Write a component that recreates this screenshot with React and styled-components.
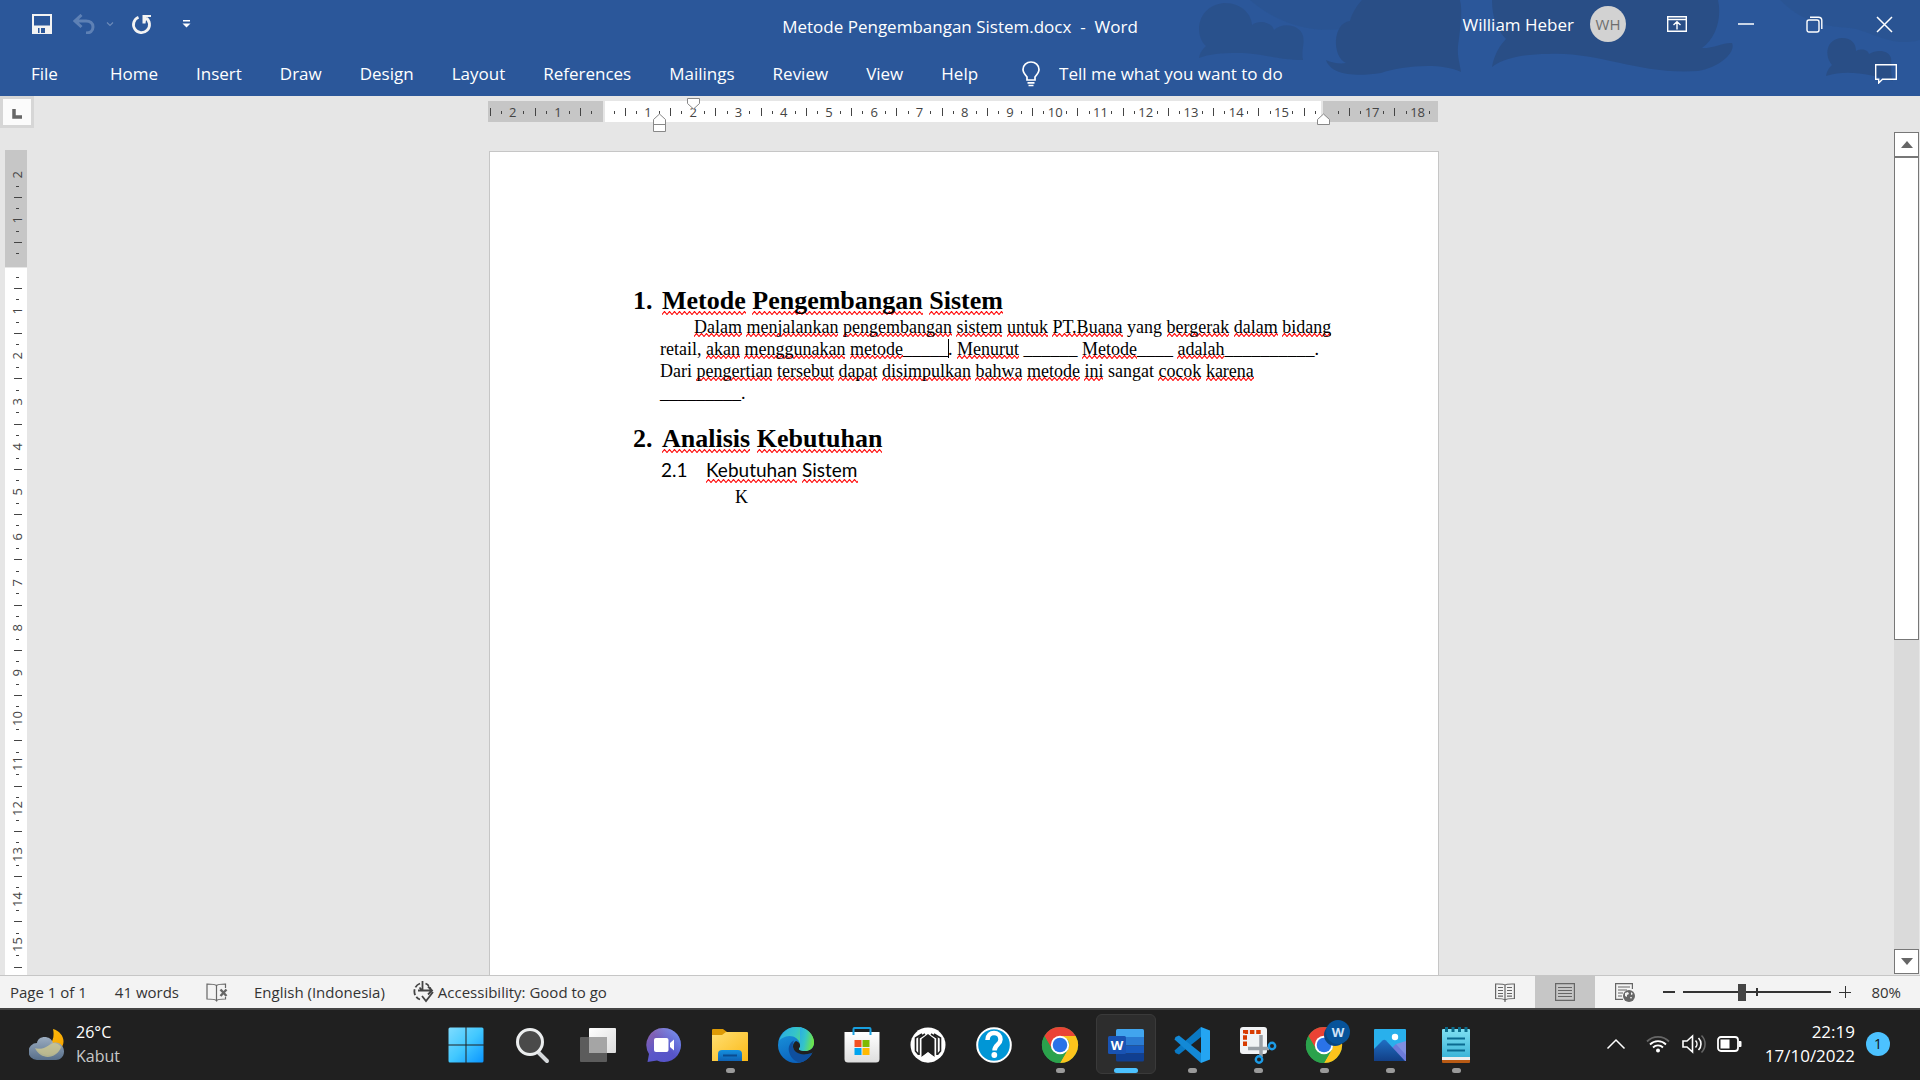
import React from "react";
import styled, { createGlobalStyle, css } from "styled-components";

const UI = `"Open Sans", "Noto Sans", sans-serif`;
const SERIF = `"Liberation Serif", "Times New Roman", serif`;

const Global = createGlobalStyle`
  *, *::before, *::after { box-sizing: border-box; }
  body { margin: 0; background: #e6e6e6; font-family: ${UI}; }
  button, input { font: inherit; color: inherit; }
`;

const Screen = styled.div`
  display: flex;
  flex-direction: column;
  height: 100vh;
  overflow: hidden;
`;

const IconButton = styled.button`
  display: flex;
  align-items: center;
  justify-content: center;
  flex: none;
  width: ${(p) => p.$w || 40}px;
  height: 40px;
  padding: 0;
  border: 0;
  background: none;
  color: inherit;
  opacity: ${(p) => (p.$faded ? 0.3 : 1)};
  svg { display: block; }
`;

/* ---------- header ---------- */

const Header = styled.header`
  position: relative;
  flex: none;
  background: #2b579a;
  color: #fff;
  font-size: 17px;
`;

const Artwork = styled.svg`
  position: absolute;
  top: 0;
  right: 0;
  height: 96px;
  width: 740px;
`;

const TitleRow = styled.div`
  position: relative;
  display: grid;
  grid-template-columns: 1fr auto 1fr;
  align-items: center;
  height: 48px;
`;

const QuickAccess = styled.div`
  display: flex;
  padding-left: 20px;
`;

const DocTitle = styled.div`
  padding-top: 5px;
  white-space: pre;
`;

const WindowTools = styled.div`
  display: flex;
  align-items: center;
  justify-content: flex-end;
`;

const UserButton = styled.button`
  display: flex;
  align-items: center;
  gap: 16px;
  margin-right: 16px;
  padding: 0;
  border: 0;
  background: none;
  white-space: nowrap;
`;

const Avatar = styled.span`
  display: grid;
  place-items: center;
  width: 36px;
  height: 36px;
  border-radius: 50%;
  background: #d2d2d2;
  color: #6e6e6e;
  font-size: 15px;
`;

const TabRow = styled.nav`
  position: relative;
  display: flex;
  align-items: center;
  height: 48px;
  padding: 3px 11px 0 12px;
`;

const Tab = styled.button`
  flex: none;
  padding: 0 ${(p) => (p.$wide ? 33 : 19)}px 0 19px;
  border: 0;
  background: none;
  white-space: nowrap;
`;

const TellMe = styled.label`
  display: flex;
  align-items: center;
  gap: 19px;
  flex: 1;
  padding-left: 25px;
  input {
    width: 260px;
    padding: 0;
    border: 0;
    outline: 0;
    background: none;
  }
  input::placeholder { color: #fff; opacity: 1; }
`;

/* ---------- workspace ---------- */

const Workspace = styled.main`
  display: grid;
  grid-template-columns: 36px minmax(0, 1fr) 28px;
  flex: 1;
  min-height: 0;
  background: #e6e6e6;
`;

const LeftRail = styled.div`
  display: flex;
  flex-direction: column;
  gap: 22px;
  min-height: 0;
`;

const TabStop = styled.button`
  flex: none;
  display: grid;
  place-items: center;
  width: 34px;
  height: 32px;
  padding: 4px 0 0;
  border: 3px solid #d6d6d6;
  background: #fbfbfb;
`;

const rulerText = css`
  color: #444;
  font-size: 13px;
  line-height: 16px;
`;

const VRuler = styled.div`
  ${rulerText}
  display: flex;
  flex-direction: column;
  gap: 1px;
  flex: 1;
  min-height: 0;
  width: 22px;
  margin-left: 5px;
`;

const HRuler = styled.div`
  ${rulerText}
  position: relative;
  display: flex;
  gap: 2px;
  width: 950px;
  height: 21px;
  margin-right: 2px;
`;

const VBand = styled.div`
  display: flex;
  flex-direction: column;
  justify-content: space-between;
  flex: ${(p) => (p.$margin ? "none" : 1)};
  height: ${(p) => (p.$margin ? "117px" : "auto")};
  padding: ${(p) => p.$pad};
  background: ${(p) => (p.$margin ? "#c6c6c6" : "#fff")};
`;

const HBand = styled.div`
  display: flex;
  justify-content: space-between;
  flex: ${(p) => (p.$margin ? "none" : 1)};
  width: ${(p) => (p.$margin ? "115px" : "auto")};
  padding: ${(p) => p.$pad};
  background: ${(p) => (p.$margin ? "#c6c6c6" : "#fff")};
`;

const HTick = styled.span`
  display: flex;
  align-items: center;
  justify-content: center;
  width: 0;
  height: 22px;
  i { flex: none; width: 1px; height: ${(p) => (p.$half ? 8 : 3)}px; background: #444; }
  b { flex: none; font-weight: 400; }
`;

const VTick = styled.span`
  display: flex;
  align-items: center;
  justify-content: center;
  height: 0;
  width: 25px;
  i { flex: none; height: 1px; width: ${(p) => (p.$half ? 8 : 3)}px; background: #444; }
  b { flex: none; font-weight: 400; writing-mode: vertical-rl; transform: rotate(180deg); margin-right: 2px; }
`;

const Marker = styled.svg`
  position: absolute;
  left: ${(p) => p.$x}px;
  top: ${(p) => p.$y}px;
`;

const Canvas = styled.div`
  display: flex;
  flex-direction: column;
  align-items: center;
  gap: 29px;
  min-height: 0;
  padding-top: 5px;
  overflow: hidden;
`;

const Paper = styled.article`
  flex: 1;
  width: 950px;
  min-height: 0;
  padding: 134px 0 0 114px;
  border: 1px solid #c6c6c6;
  border-bottom: 0;
  background: #fff;
  color: #000;
  font-family: ${SERIF};
  font-size: 18px;
  line-height: 22px;
  white-space: nowrap;
`;

const Heading = styled.h1`
  display: flex;
  margin: ${(p) => (p.$spaced ? 20 : 0)}px 0 0 29px;
  font-size: 26px;
  font-weight: 700;
  line-height: 30px;
`;

const HeadingNumber = styled.span`
  width: 29px;
`;

const Para = styled.p`
  margin: 0 0 0 ${(p) => p.$indent}px;
  text-indent: ${(p) => p.$first || 0}px;
`;

const Misspelt = styled.span`
  background: url("data:image/svg+xml,%3Csvg xmlns='http://www.w3.org/2000/svg' width='5' height='4'%3E%3Cpath d='M-1 2L0 3.500L2.500 .5L5 3.500L6 2' fill='none' stroke='%23f00' stroke-width='1.100'/%3E%3C/svg%3E") left bottom / 5px 4px repeat-x;
`;

const SubHeading = styled.h2`
  display: flex;
  margin: 0 0 0 57px;
  font-family: Lato, "Open Sans", sans-serif;
  font-size: 19px;
  font-weight: 400;
  line-height: 32px;
  ${Misspelt} { padding-bottom: 2px; }
`;

const SubNumber = styled.span`
  width: 45px;
`;

const Caret = styled.span`
  display: inline-block;
  width: 1px;
  height: 19px;
  margin-right: -1px;
  background: #000;
  vertical-align: -3px;
`;

const ScrollBar = styled.div`
  display: flex;
  flex-direction: column;
  margin: 36px 0 1px;
  padding: 0 1px 0 2px;
`;

const ScrollTrack = styled.div`
  flex: 1;
  min-height: 0;
  background: #dadada;
`;

const ScrollThumb = styled.div`
  height: 61%;
  border: 1px solid #777;
  background: #fff;
`;

const ScrollButton = styled.button`
  display: grid;
  place-items: center;
  height: 25px;
  padding: 0;
  border: 1px solid #777;
  background: #fff;
`;

/* ---------- status bar ---------- */

const StatusBar = styled.footer`
  display: flex;
  align-items: stretch;
  justify-content: space-between;
  flex: none;
  height: 35px;
  border-top: 1px solid #c6c6c6;
  border-bottom: 2px solid #444;
  background: #f3f3f3;
  color: #333;
  font-size: 15px;
`;

const StatusGroup = styled.div`
  display: flex;
  align-items: stretch;
  padding: ${(p) => p.$pad};
`;

const StatusItem = styled.button`
  display: flex;
  align-items: center;
  gap: 4px;
  margin-right: ${(p) => p.$gap || 0}px;
  padding: 0;
  border: 0;
  background: none;
  white-space: nowrap;
`;

const ZoomLevel = styled(StatusItem)`
  margin-left: 12px;
`;

const ViewButton = styled.button`
  display: grid;
  place-items: center;
  width: 60px;
  padding: 0;
  border: 0;
  background: ${(p) => (p.$on ? "#c6c6c6" : "none")};
`;

const ZoomButton = styled.button`
  display: grid;
  place-items: center;
  width: 28px;
  padding: 0;
  border: 0;
  background: none;
`;

const ZoomSlider = styled.input`
  appearance: none;
  width: 148px;
  height: 32px;
  margin: 0;
  background:
    linear-gradient(#333, #333) center / 2px 8px no-repeat,
    linear-gradient(#333, #333) center / 100% 2px no-repeat;
  &::-webkit-slider-thumb {
    appearance: none;
    width: 8px;
    height: 17px;
    background: #444;
  }
`;

/* ---------- taskbar ---------- */

const Taskbar = styled.div`
  display: grid;
  grid-template-columns: 1fr auto 1fr;
  flex: none;
  height: 70px;
  background: #202020;
  color: #fff;
  font-size: 16px;
  line-height: 24px;
`;

const Weather = styled.button`
  display: flex;
  align-items: center;
  gap: 11px;
  justify-self: start;
  padding: 0 0 2px 29px;
  border: 0;
  background: none;
  text-align: left;
  line-height: 24px;
  small { display: block; color: #c8c8c8; font-size: 16px; }
`;

const Apps = styled.div`
  display: flex;
  gap: 6px;
  padding: 4px 0 6px 2px;
`;

const AppButton = styled.button`
  display: flex;
  flex-direction: column;
  align-items: center;
  justify-content: flex-end;
  gap: 5px;
  width: 60px;
  padding: 0;
  border: 1px solid ${(p) => (p.$active ? "#3a3a3a" : "transparent")};
  border-radius: 6px;
  background: ${(p) => (p.$active ? "#2d2d2d" : "none")};
  svg { display: block; overflow: visible; }
  &::after {
    content: "";
    width: ${(p) => (p.$active ? 24 : 9)}px;
    height: 5px;
    border-radius: 3px;
    background: ${(p) => (p.$active ? "#4cc2ff" : p.$running ? "#9a9a9a" : "transparent")};
  }
`;

const Tray = styled.div`
  display: flex;
  align-items: center;
  justify-content: flex-end;
  padding: 0 30px 3px 0;
`;

const Clock = styled.button`
  margin: 0 11px 0 17px;
  padding: 0;
  border: 0;
  background: none;
  text-align: right;
  font-size: 17px;
  line-height: 24px;
`;

const Badge = styled.span`
  display: grid;
  place-items: center;
  width: 24px;
  height: 24px;
  border-radius: 50%;
  background: #4cc2ff;
  color: #111;
  font-size: 14px;
`;

/* ---------- icons ---------- */

const SaveIcon = () => (
  <svg width="20" height="20" viewBox="0 0 20 20">
    <path d="M1 1h18v18H1z" fill="none" stroke="#f3f3f3" strokeWidth="2" />
    <path d="M1 11.500h18V19H1z" fill="#f3f3f3" />
    <path d="M6 14h7v5H6z" fill="#2b579a" />
    <path d="M7.500 14h1.500v5H7.500z" fill="#f3f3f3" />
  </svg>
);
const UndoIcon = () => (
  <svg width="22" height="20" viewBox="0 0 22 20" fill="none" stroke="#d5e2f5" strokeWidth="3">
    <path d="M8.500 1L2 7l6.500 6M2.500 7H13c4 0 7 2 7 6 0 4-3 6-7 6" />
  </svg>
);
const SmallChevron = () => (
  <svg width="8" height="5" viewBox="0 0 8 5" fill="none" stroke="#fff" strokeWidth="1.200"><path d="M1 .5l3 3 3-3" /></svg>
);
const RedoIcon = () => (
  <svg width="21" height="21" viewBox="0 0 21 21">
    <path d="M7.500 3.200A8 8 0 1 0 15 4" fill="none" stroke="#f3f3f3" strokeWidth="2.800" />
    <path d="M11.500 1H20v2h-4.500l-1 6.500h-3z" fill="#f3f3f3" />
  </svg>
);
const CustomizeIcon = () => (
  <svg width="9" height="8" viewBox="0 0 9 8" fill="#fff"><path d="M1 0h7v1.500H1zM0.500 3.500h8L4.500 7.500z" /></svg>
);
const RibbonIcon = () => (
  <svg width="20" height="16" viewBox="0 0 20 16" fill="none" stroke="#fff" strokeWidth="1.400">
    <path d="M.7.700h18.600v14.600H.700zM.7 3.500h18.600M10 13.500V6M6.500 9L10 5.800 13.500 9" />
  </svg>
);
const MinIcon = () => <svg width="16" height="2"><path d="M0 1h16" stroke="#fff" strokeWidth="1.500" /></svg>;
const RestoreIcon = () => (
  <svg width="17" height="17" viewBox="0 0 17 17" fill="none" stroke="#fff" strokeWidth="1.400">
    <rect x="1" y="4" width="12" height="12" rx="2" /><path d="M4 1.200h8.500a3.300 3.300 0 0 1 3.300 3.300V13" />
  </svg>
);
const CloseIcon = () => <svg width="17" height="17"><path d="M1 1l15 15M16 1L1 16" stroke="#fff" strokeWidth="1.500" /></svg>;
const BulbIcon = () => (
  <svg width="18" height="26" viewBox="0 0 18 26" fill="none" stroke="#fff" strokeWidth="1.700">
    <path d="M5 19v-3C3 13.500 1 11.500 1 8.500a8 7.500 0 0 1 16 0c0 3-2 5-4 7.500v3zM5.500 21.800h7M6.500 24.500h5" />
  </svg>
);
const CommentIcon = () => (
  <svg width="22" height="20" viewBox="0 0 22 20" fill="none" stroke="#fff" strokeWidth="1.400">
    <path d="M.7.700h20.600v14.600H7.500L3.700 19v-3.700H.7z" />
  </svg>
);

const ProofIcon = () => (
  <svg width="22" height="19" viewBox="0 0 22 19" fill="none" stroke="#666" strokeWidth="1.200">
    <path d="M10.500 2.500C9 1.200 7 1 1 1v15c6 0 8 0 9.500 1.700zM10.500 2.500C12 1.200 14 1 19.500 1v4M10.500 17.700C12 16 14 16 19.500 16v-2" />
    <path d="M14.500 6.500l6 6.500M20.500 6.500l-6 6.500" strokeWidth="2.400" />
  </svg>
);
const AccessIcon = () => (
  <svg width="21" height="22" viewBox="0 0 21 22" fill="none" stroke="#444" strokeWidth="1.800">
    <path d="M7 2.500A8.500 8.500 0 0 0 7 18.500" strokeDasharray="6 2" />
    <path d="M12.500 2.500a8.500 8.500 0 0 1 5 5.500" strokeDasharray="4 2" />
    <path d="M9.500 0v10M5 9.500h13M15 5.500l4 4-4 4M6.500 6.500l3 3.500M9 15l4 5 7-9" />
  </svg>
);
const ReadIcon = () => (
  <svg width="20" height="19" viewBox="0 0 20 19" fill="none" stroke="#666" strokeWidth="1.200">
    <path d="M10 2C8.500.800 6 1 .6 1v14.500c5 0 8 0 9.400 1.500 1.400-1.500 4.400-1.500 9.400-1.500V1C14 1 11.500.800 10 2zM10 2v17M3 4.500h5M3 7.500h5M3 10.500h5M3 13.200h5M12 4.500h5M12 7.500h5M12 10.500h5M12 13.200h5" />
  </svg>
);
const PrintLayoutIcon = () => (
  <svg width="20" height="18" viewBox="0 0 20 18" fill="none" stroke="#666" strokeWidth="1.200">
    <path d="M.6.600h18.800v16.800H.6zM3 4.500h14M3 7.500h14M3 10.500h14M3 13.500h14" />
  </svg>
);
const WebLayoutIcon = () => (
  <svg width="20" height="19" viewBox="0 0 20 19">
    <path d="M8 16.400H.6V.600h16.800V6M3 4h12M3 7h9M3 10h5M3 13h4" fill="none" stroke="#666" strokeWidth="1.200" />
    <circle cx="14" cy="13" r="6" fill="#666" />
    <path d="M10 10l3-1 1 2-2 1v2l-2-1zM16 9l2 2-2 1zM15 14h2l-1 2z" fill="#f3f3f3" />
  </svg>
);

const WeatherIcon = () => (
  <svg width="36" height="33" viewBox="0 0 36 33">
    <defs>
      <linearGradient id="moon" x1="0" y1="0" x2="1" y2="1"><stop offset="0" stopColor="#ffc40c" /><stop offset="1" stopColor="#f59e00" /></linearGradient>
      <linearGradient id="cloud" x1="0" y1="0" x2="0" y2="1"><stop offset="0" stopColor="#a9bcd2" /><stop offset="1" stopColor="#5e7896" /></linearGradient>
    </defs>
    <path d="M24 1c10 3 14 13 7 21-6 7-19 7-24-2 11 3 20-6 17-19z" fill="url(#moon)" />
    <path d="M8 32a8 8 0 0 1 0-17c1-8 14-8 16 0 6-2 11 3 11 8.500S31 32 27 32z" fill="url(#cloud)" opacity=".9" />
    <path d="M6 20c7 3 14-3 18-5 4 0 7 2 8 4-4 12-20 14-26 1z" fill="#d9cf8c" opacity=".65" />
  </svg>
);
const StartIcon = () => (
  <svg width="36" height="36" viewBox="0 0 36 36">
    <defs><linearGradient id="win" x1="0" y1="0" x2="1" y2="1"><stop offset="0" stopColor="#7fdcff" /><stop offset=".5" stopColor="#42c8ff" /><stop offset="1" stopColor="#0a95ff" /></linearGradient></defs>
    <path d="M2 .5h15.500v17H.5V2A1.500 1.500 0 0 1 2 .5zM18.500 .5H34A1.500 1.500 0 0 1 35.500 2v15.500h-17zM.5 18.500h17v17H2A1.500 1.500 0 0 1 .5 34zM18.500 18.500h17V34a1.500 1.500 0 0 1-1.500 1.500H18.500z" fill="url(#win)" />
  </svg>
);
const SearchIcon = () => (
  <svg width="36" height="36" viewBox="0 0 36 36">
    <path d="M24 25l9 9" stroke="#d5d8db" strokeWidth="4" strokeLinecap="round" />
    <circle cx="16" cy="15" r="12.500" fill="#4a4a4a" stroke="#eceeef" strokeWidth="3" />
  </svg>
);
const TaskViewIcon = () => (
  <svg width="36" height="36" viewBox="0 0 36 36">
    <defs><linearGradient id="tv" x1="0" y1="0" x2="1" y2="1"><stop offset="0" stopColor="#fff" /><stop offset="1" stopColor="#dcdcdc" /></linearGradient></defs>
    <rect x="9" y="1" width="27" height="25" rx="1" fill="url(#tv)" />
    <rect x="0" y="10" width="27" height="25" rx="1" fill="#5c5c5c" />
    <path d="M9 10h18v16H9z" fill="#a5a5a5" />
  </svg>
);
const ChatIcon = () => (
  <svg width="36" height="36" viewBox="0 0 36 36">
    <defs><linearGradient id="chat" x1="0" y1="0" x2=".7" y2="1"><stop offset="0" stopColor="#9564a8" /><stop offset=".6" stopColor="#5b57c9" /><stop offset="1" stopColor="#5553c8" /></linearGradient>
      <linearGradient id="chat2" x1="0" y1="1" x2="1" y2="0"><stop offset=".5" stopColor="#7b9bf5" stopOpacity="0" /><stop offset="1" stopColor="#7b9bf5" /></linearGradient></defs>
    <path d="M18 1a17 17 0 1 1-7 32.500L1.500 35 3 27A17 17 0 0 1 18 1z" fill="url(#chat)" />
    <path d="M18 1a17 17 0 1 1-7 32.500L1.500 35 3 27A17 17 0 0 1 18 1z" fill="url(#chat2)" />
    <rect x="8" y="11" width="14.500" height="14" rx="2" fill="#fff" /><path d="M24 16l4-3.500v11L24 20z" fill="#fff" />
  </svg>
);
const FolderIcon = () => (
  <svg width="36" height="36" viewBox="0 0 36 36">
    <defs><linearGradient id="fold" x1="0" y1="0" x2="1" y2="1"><stop offset="0" stopColor="#ffdf72" /><stop offset="1" stopColor="#fbb917" /></linearGradient>
      <linearGradient id="foldb" x1="0" y1="0" x2="0" y2="1"><stop offset="0" stopColor="#1490df" /><stop offset="1" stopColor="#0f62b4" /></linearGradient></defs>
    <path d="M0 3a1 1 0 0 1 1-1h10l4 3-4 4H0z" fill="#dd9a05" />
    <path d="M0 8h10l4-3h21a1 1 0 0 1 1 1v28H0z" fill="url(#fold)" />
    <path d="M6 34V27a4 4 0 0 1 4-4h16a4 4 0 0 1 4 4v7z" fill="url(#foldb)" /><path d="M11 28.500h14" stroke="#0a4c90" strokeWidth="2" />
  </svg>
);
const EdgeIcon = () => (
  <svg width="36" height="36" viewBox="0 0 36 36">
    <defs><linearGradient id="ed1" x1="0" y1="0" x2="1" y2=".3"><stop offset="0" stopColor="#29a9e8" /><stop offset=".5" stopColor="#35c4c9" /><stop offset="1" stopColor="#6be34f" /></linearGradient>
      <linearGradient id="ed2" x1="0" y1="0" x2=".4" y2="1"><stop offset="0" stopColor="#1c9be0" /><stop offset="1" stopColor="#0b63bd" /></linearGradient></defs>
    <circle cx="18" cy="18" r="18" fill="url(#ed2)" />
    <path d="M1 14C4 5 10 0 18 0c11 0 18 8 18 15.500 0 6-5 8.500-9 8.500-4 0-6.500-1-6-2.500 1-1 1.500-2.500 1-4.500C21 11 14 7.500 8 9.500 4.500 10.500 2 12.500 1 14z" fill="url(#ed1)" />
    <path d="M16 13.500c-4 2-6 6-5 11 1 5 5 10 11 11 5-1 9-4 12-9-1-1-3 1-7 1-6 0-11-3-12-7-.5-3 0-5 1-7z" fill="#0f4f9e" />
    <path d="M18 14c-4 2-4 8 0 11 4 3 10 3 16 1l2-2V16c0 6-5 8-9 8-4 0-6.500-1-6-2.500 2-2 1.500-6-3-7.500z" fill="#202020" />
    <path d="M22 0c9 2 14 9 14 15.500 0 6-5 8.500-9 8.500-4 0-6.500-1-6-2.500 1-1 1.500-2.500 1-4.500z" fill="url(#ed1)" />
  </svg>
);
const StoreIcon = () => (
  <svg width="36" height="36" viewBox="0 0 36 36">
    <defs><linearGradient id="st" x1="0" y1="0" x2="0" y2="1"><stop offset="0" stopColor="#fff" /><stop offset="1" stopColor="#dedede" /></linearGradient></defs>
    <path d="M.5 5h35v27a3.500 3.500 0 0 1-3.500 3.500H4A3.500 3.500 0 0 1 .5 32z" fill="url(#st)" />
    <path d="M9.500 8V2a1 1 0 0 1 1-1h15a1 1 0 0 1 1 1v6" fill="none" stroke="#18a0e0" strokeWidth="2" />
    <path d="M10.500 13h7v7h-7z" fill="#f25022" /><path d="M18.500 13h7v7h-7z" fill="#7fba00" /><path d="M10.500 21h7v7h-7z" fill="#00a4ef" /><path d="M18.500 21h7v7h-7z" fill="#ffb900" />
  </svg>
);
const HomeShieldIcon = () => (
  <svg width="36" height="36" viewBox="0 0 36 36">
    <circle cx="18" cy="18" r="17.500" fill="#fff" />
    <path d="M12 7L5.500 11v13l3 3.500M24 7l6.500 4v13l-3 3.500M15 7l-6 4v17M21 7l6 4v17" fill="none" stroke="#202020" strokeWidth="1.600" />
    <path d="M11.500 12l6.500-5 6.500 5v18L18 25l-6.500 5z" fill="#202020" />
    <path d="M11 34v-3.500L18 25.500l7 5V34l-7 1.500z" fill="#fff" />
  </svg>
);
const HelpIcon = () => (
  <svg width="36" height="36" viewBox="0 0 36 36">
    <circle cx="18" cy="18" r="16.800" fill="#0096d6" stroke="#fff" strokeWidth="2" />
    <path d="M11.500 13c0-5 3-7 6.500-7s6.500 2.500 6.500 6.500c0 5-6 5.500-6 11" fill="none" stroke="#fff" strokeWidth="4.500" />
    <circle cx="18.300" cy="28" r="2.900" fill="#fff" />
  </svg>
);
const ChromeArt = () => (
  <>
    <circle cx="18" cy="18" r="18" fill="#2ba24c" />
    <path d="M2.400 9A18 18 0 0 1 33.600 9H18L10.200 13.500 10.200 22.500z" fill="#ea4335" />
    <path d="M33.600 9A18 18 0 0 1 18 36L25.800 22.500A9 9 0 0 0 25 12L18 9z" fill="#fcc31c" />
    <path d="M2.400 9L10.200 22.500 18 27 25.800 22.500 18 36A18 18 0 0 1 2.400 9z" fill="#2ba24c" />
    <circle cx="18" cy="18" r="9.200" fill="#fff" /><circle cx="18" cy="18" r="7.300" fill="#2a73e8" />
  </>
);
const ChromeIcon = () => <svg width="36" height="36" viewBox="0 0 36 36"><ChromeArt /></svg>;
const ChromeProfileIcon = () => (
  <svg width="36" height="36" viewBox="0 0 36 36">
    <ChromeArt />
    <circle cx="29" cy="8" r="11" fill="#0a4680" /><circle cx="32" cy="5" r="12" fill="#07539a" />
    <text x="32" y="10" textAnchor="middle" fontFamily={UI} fontWeight="700" fontSize="13" fill="#cfe3f7">W</text>
  </svg>
);
const WordIcon = () => (
  <svg width="36" height="36" viewBox="0 0 36 36">
    <path d="M8 3.500A1.500 1.500 0 0 1 9.500 2h25A1.500 1.500 0 0 1 36 3.500V10H8z" fill="#41a5ee" />
    <path d="M8 10h28v8.500H8z" fill="#2b7cd3" /><path d="M8 18.500h28v8H8z" fill="#185abd" />
    <path d="M8 26.500h28V33a1.500 1.500 0 0 1-1.500 1.500h-25A1.500 1.500 0 0 1 8 33z" fill="#103f91" />
    <rect x="0" y="9" width="18" height="18" rx="1.500" fill="#1953b3" />
    <text x="9" y="23" textAnchor="middle" fontFamily={UI} fontWeight="700" fontSize="13" fill="#fff">W</text>
  </svg>
);
const CodeIcon = () => (
  <svg width="36" height="36" viewBox="0 0 36 36">
    <path d="M27 0v10L5 27.500 1.500 26l-1-2.500z" fill="#0a79c4" />
    <path d="M27 36V26L5 8.500 1.500 10l-1 2.500z" fill="#1389d6" />
    <path d="M27 0l9 3.500v29L27 36z" fill="#24a5f2" />
  </svg>
);
const SnipIcon = () => (
  <svg width="36" height="36" viewBox="0 0 36 36">
    <rect x="0" y="0" width="27" height="27" rx="3" fill="#f1f3f5" />
    <path d="M5 19V5h16" fill="none" stroke="#d83b01" strokeWidth="4" strokeDasharray="4.500 1.800" />
    <path d="M8 21.500h21M21 8v22" fill="none" stroke="#9aa0a6" strokeWidth="3.500" />
    <circle cx="32" cy="19" r="3.200" fill="none" stroke="#1c9be6" strokeWidth="2.400" /><circle cx="19" cy="32.500" r="3.200" fill="none" stroke="#1c9be6" strokeWidth="2.400" />
  </svg>
);
const PhotosIcon = () => (
  <svg width="36" height="36" viewBox="0 0 36 36">
    <defs><linearGradient id="ph" x1="0" y1="0" x2="0" y2="1"><stop offset="0" stopColor="#1f6fc4" /><stop offset="1" stopColor="#123f86" /></linearGradient></defs>
    <path d="M2 3a1 1 0 0 1 1-1h30a1 1 0 0 1 1 1v31H2z" fill="#29b0ec" />
    <path d="M16 25l8-8 10 10v7H22z" fill="#6d7bd9" /><path d="M24 17l10-3v14z" fill="#7f8fe0" />
    <path d="M2 22l8.500-8.500a2.500 2.500 0 0 1 3.500 0L33 34H2z" fill="url(#ph)" /><circle cx="23" cy="10" r="3.200" fill="#fff" />
  </svg>
);
const NotepadIcon = () => (
  <svg width="36" height="36" viewBox="0 0 36 36">
    <defs><linearGradient id="np" x1="0" y1="0" x2="0" y2="1"><stop offset="0" stopColor="#7fe0f2" /><stop offset="1" stopColor="#3db5d8" /></linearGradient></defs>
    <path d="M4 30h28v5a1 1 0 0 1-1 1H5a1 1 0 0 1-1-1z" fill="#b85a14" /><path d="M4 29h28v4H4z" fill="#eee" />
    <path d="M4 3a1 1 0 0 1 1-1h26a1 1 0 0 1 1 1v27H4z" fill="url(#np)" />
    <path d="M8.500 0v5M15 0v5M21.500 0v5M28 0v5" stroke="#0a6c8c" strokeWidth="3" />
    <path d="M9 11.500h18M9 17.500h18M9 23.500h18" stroke="#0a6a90" strokeWidth="2.200" />
  </svg>
);

const ChevronUp = () => <svg width="20" height="12" viewBox="0 0 20 12"><path d="M1.500 10.500L10 2l8.500 8.500" fill="none" stroke="#fff" strokeWidth="1.500" /></svg>;
const WifiIcon = () => (
  <svg width="24" height="18" viewBox="0 0 24 18" fill="none" stroke="#fff" strokeWidth="1.800">
    <path d="M1 6.500a15.500 15.500 0 0 1 22 0" stroke="#666" /><path d="M4 9.500a11.300 11.300 0 0 1 16 0M7 12.500a7 7 0 0 1 10 0" /><circle cx="12" cy="15.500" r="2" fill="#fff" stroke="none" />
  </svg>
);
const SpeakerIcon = () => (
  <svg width="24" height="20" viewBox="0 0 24 20" fill="none" stroke="#fff" strokeWidth="1.600">
    <path d="M1 7h4l5.500-5v16L5 13H1zM13.500 6.500a5 5 0 0 1 0 7M16.500 4a8.500 8.500 0 0 1 0 12" /><path d="M19.500 1.500a12 12 0 0 1 0 17" stroke="#666" />
  </svg>
);
const BatteryIcon = () => (
  <svg width="25" height="16" viewBox="0 0 25 16"><rect x="1" y="1" width="20" height="14" rx="3" fill="none" stroke="#fff" strokeWidth="1.800" /><path d="M3.500 3.500h9v9h-9zM22 5h1.500a1 1 0 0 1 1 1v4a1 1 0 0 1-1 1H22z" fill="#fff" /></svg>
);

/* ---------- parts ---------- */

/* Words inside {braces} get the spelling squiggle, a | is the text cursor. */
const Checked = ({ children }) =>
  children.split(/(\{[^}]*\}|\|)/).map((part, i) => {
    if (part === "|") return <Caret key={i} />;
    if (part[0] === "{") return <Misspelt key={i}>{part.slice(1, -1)}</Misspelt>;
    return part;
  });

/* Ruler positions are counted in quarters of a centimetre. */
const quarters = (from, to) => Array.from({ length: to - from + 1 }, (_, i) => from + i);
const ticks = (Tick, from, to) =>
  quarters(from, to).map((q) => (
    <Tick key={q} $half={q % 4 !== 0 && q % 2 === 0}>
      {q % 4 === 0 ? <b>{Math.abs(q / 4)}</b> : <i />}
    </Tick>
  ));

const TABS = ["File", "Home", "Insert", "Draw", "Design", "Layout", "References", "Mailings", "Review", "View", "Help"];

const APPS = [
  ["Start", StartIcon], ["Search", SearchIcon], ["Task View", TaskViewIcon], ["Chat", ChatIcon],
  ["File Explorer", FolderIcon, true], ["Edge", EdgeIcon], ["Store", StoreIcon], ["Home", HomeShieldIcon],
  ["Help", HelpIcon], ["Chrome", ChromeIcon, true], ["Word", WordIcon, true, true], ["Code", CodeIcon, true],
  ["Snipping Tool", SnipIcon, true], ["Chrome profile", ChromeProfileIcon, true], ["Photos", PhotosIcon, true], ["Notepad", NotepadIcon, true],
];

export default function App() {
  return (
    <Screen>
      <Global />
      <Header>
        <Artwork viewBox="0 0 740 96" aria-hidden="true">
          <g fill="#294e86">
            <path d="M19 58c1-6 4-9 7-12C14 36 16 6 44 3c20 0 28 14 28 22 8-6 20-2 22 5 8-8 26-6 29 6 2 8-2 14 0 24-26 0-40-7-66-7-16 0-28 1-38 5z" opacity=".7" />
            <path d="M70 0h210v26c-30 20-60-10-100 0-40 10-80 0-110-26z" opacity=".3" />
            <path d="M146 60c6 3 14 4 20 3-14-6-14-40 4-42 2-8 6-14 12-21h98c3 12 0 30-2 46-1 10 2 18 3 26-20-10-60-6-80 1-26 4-50 2-55-13z" />
            <path d="M312 67c2-12 8-22 14-28-8-8-14-20-14-39h226c4 18-2 38-16 48 14 0 22-6 30-5 4 8-10 24-34 28-60 4-100-20-150-17-24 0-44 4-56 13z" />
            <path d="M646 76c1-6 4-9 6-11-8-10-6-26 10-27 10 0 14 6 14 13 6-3 12-1 13 3 8-5 20-4 22 4 1 8-1 16 2 23-22-6-44-12-67-5z" />
            <path d="M600 0h140v40c-30 8-50-10-70-12-30-2-50-8-70-28z" opacity=".3" />
          </g>
        </Artwork>
        <TitleRow>
          <QuickAccess>
            <IconButton $w={43} aria-label="Save"><SaveIcon /></IconButton>
            <IconButton $w={42} $faded aria-label="Undo"><UndoIcon /></IconButton>
            <IconButton $w={10} $faded aria-label="Undo list"><SmallChevron /></IconButton>
            <IconButton $w={53} aria-label="Repeat"><RedoIcon /></IconButton>
            <IconButton $w={36} aria-label="Customize"><CustomizeIcon /></IconButton>
          </QuickAccess>
          <DocTitle>Metode Pengembangan Sistem.docx  -  Word</DocTitle>
          <WindowTools>
            <UserButton>William Heber<Avatar>WH</Avatar></UserButton>
            <IconButton $w={69} aria-label="Ribbon options"><RibbonIcon /></IconButton>
            <IconButton $w={69} aria-label="Minimize"><MinIcon /></IconButton>
            <IconButton $w={69} aria-label="Restore"><RestoreIcon /></IconButton>
            <IconButton $w={71} aria-label="Close"><CloseIcon /></IconButton>
          </WindowTools>
        </TitleRow>
        <TabRow>
          {TABS.map((t) => <Tab key={t} $wide={t === "File"}>{t}</Tab>)}
          <TellMe>
            <BulbIcon />
            <input aria-label="Tell me" placeholder="Tell me what you want to do" />
          </TellMe>
          <IconButton $w={46} aria-label="Comments"><CommentIcon /></IconButton>
        </TabRow>
      </Header>

      <Workspace>
        <LeftRail>
          <TabStop aria-label="Tab stop">
            <svg width="10" height="10"><path d="M2 0v8h8" fill="none" stroke="#666" strokeWidth="3.500" /></svg>
          </TabStop>
          <VRuler>
            <VBand $margin $pad="25px 0 13px">{ticks(VTick, -8, -1)}</VBand>
            <VBand $pad="9px 0 7px">{ticks(VTick, 1, 62)}</VBand>
          </VRuler>
        </LeftRail>
        <Canvas>
          <HRuler>
            <HBand $margin $pad="0 11px 0 2px">{ticks(HTick, -10, -1)}</HBand>
            <HBand $pad="0 5px 0 9px">{ticks(HTick, 1, 63)}</HBand>
            <HBand $margin $pad="0 9px 0 15px">{ticks(HTick, 65, 73)}</HBand>
            <Marker $x={199} $y={-3} width="13" height="12"><path d="M.5.500h12v5L6.500 11 .5 5.500z" fill="#fff" stroke="#888" /></Marker>
            <Marker $x={165} $y={12} width="13" height="19"><path d="M.5 18.500v-12L6.500 1l6 5.500v12zM.5 11.500h12" fill="#fff" stroke="#888" /></Marker>
            <Marker $x={829} $y={12} width="13" height="12"><path d="M.5 11.500v-5L6.500 1l6 5.500v5z" fill="#fff" stroke="#888" /></Marker>
          </HRuler>
          <Paper>
            <Heading><HeadingNumber>1.</HeadingNumber><span><Checked>{"{Metode} {Pengembangan} {Sistem}"}</Checked></span></Heading>
            <Para $indent={56} $first={34}>
              <Checked>{"{Dalam} {menjalankan} {pengembangan} {sistem} {untuk} {PT.Buana} yang {bergerak} {dalam} {bidang}"}</Checked><br />
              <Checked>{"retail, {akan} {menggunakan} {metode}_____|. {Menurut} ______ {Metode}____ {adalah}__________."}</Checked><br />
              <Checked>{"Dari {pengertian} {tersebut} {dapat} {disimpulkan} {bahwa} {metode} {ini} sangat {cocok} {karena}"}</Checked><br />
              _________.
            </Para>
            <Heading $spaced><HeadingNumber>2.</HeadingNumber><span><Checked>{"{Analisis} {Kebutuhan}"}</Checked></span></Heading>
            <SubHeading><SubNumber>2.1</SubNumber><span><Checked>{"{Kebutuhan} {Sistem}"}</Checked></span></SubHeading>
            <Para $indent={131}>K</Para>
          </Paper>
        </Canvas>
        <ScrollBar>
          <ScrollButton aria-label="Scroll up"><svg width="12" height="7"><path d="M6 0l6 7H0z" fill="#666" /></svg></ScrollButton>
          <ScrollTrack><ScrollThumb /></ScrollTrack>
          <ScrollButton aria-label="Scroll down"><svg width="12" height="7"><path d="M0 0h12L6 7z" fill="#666" /></svg></ScrollButton>
        </ScrollBar>
      </Workspace>

      <StatusBar>
        <StatusGroup $pad="0 0 0 10px">
          <StatusItem $gap={28}>Page 1 of 1</StatusItem>
          <StatusItem $gap={27}>41 words</StatusItem>
          <StatusItem $gap={26} aria-label="Proofing"><ProofIcon /></StatusItem>
          <StatusItem $gap={28}>English (Indonesia)</StatusItem>
          <StatusItem><AccessIcon />Accessibility: Good to go</StatusItem>
        </StatusGroup>
        <StatusGroup $pad="0 19px 0 0">
          <ViewButton aria-label="Read mode"><ReadIcon /></ViewButton>
          <ViewButton $on aria-label="Print layout"><PrintLayoutIcon /></ViewButton>
          <ViewButton aria-label="Web layout"><WebLayoutIcon /></ViewButton>
          <ZoomButton aria-label="Zoom out"><svg width="12" height="2"><path d="M0 1h12" stroke="#333" strokeWidth="2" /></svg></ZoomButton>
          <ZoomSlider type="range" aria-label="Zoom" min="0" max="100" defaultValue="39" />
          <ZoomButton aria-label="Zoom in"><svg width="12" height="12"><path d="M0 6.500h12M6.500 0v12" stroke="#333" /></svg></ZoomButton>
          <ZoomLevel>80%</ZoomLevel>
        </StatusGroup>
      </StatusBar>

      <Taskbar>
        <Weather><WeatherIcon /><span>26°C<small>Kabut</small></span></Weather>
        <Apps>
          {APPS.map(([name, Icon, running, active]) => (
            <AppButton key={name} aria-label={name} $running={running} $active={active}><Icon /></AppButton>
          ))}
        </Apps>
        <Tray>
          <IconButton $w={48} aria-label="Hidden icons"><ChevronUp /></IconButton>
          <IconButton $w={36} aria-label="Network"><WifiIcon /></IconButton>
          <IconButton $w={36} aria-label="Volume"><SpeakerIcon /></IconButton>
          <IconButton $w={36} aria-label="Battery"><BatteryIcon /></IconButton>
          <Clock>22:19<br />17/10/2022</Clock>
          <Badge>1</Badge>
        </Tray>
      </Taskbar>
    </Screen>
  );
}
